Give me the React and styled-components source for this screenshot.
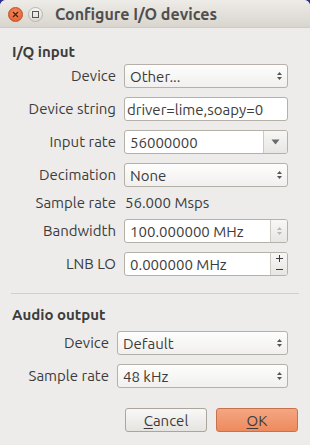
import React from 'react'
import styled, { createGlobalStyle } from 'styled-components'

const Global = createGlobalStyle`
  html, body {
    margin: 0;
    padding: 0;
    background: #2c2f8c;
  }
  body {
    font-family: Ubuntu, Lato, "Open Sans", sans-serif;
    font-size: 15px;
    color: #3c3c3c;
  }
`

const Window = styled.div`
  width: 310px;
  height: 445px;
  background: #edeceb;
  border-radius: 6px 6px 0 0;
  overflow: hidden;
  display: flex;
  flex-direction: column;
`

const TitleBar = styled.div`
  height: 28px;
  flex: none;
  display: flex;
  align-items: center;
  padding-left: 8px;
  gap: 5px;
  background: linear-gradient(#eeece8, #d9d5ce);
  border-bottom: 1px solid #cfcbc4;
  box-sizing: border-box;
`

const WinButton = styled.div`
  width: 15px;
  height: 15px;
  border-radius: 50%;
  box-sizing: border-box;
  display: flex;
  align-items: center;
  justify-content: center;
  background: ${p => p.close ? 'radial-gradient(circle at 50% 35%, #f58b5d, #e2582a)' : 'linear-gradient(#f6f5f3, #dcd9d4)'};
  border: 1px solid ${p => p.close ? '#c44e24' : '#b9b5ae'};
  margin-top: 1px;
`

const Title = styled.div`
  margin-left: 7px;
  font-weight: bold;
  font-size: 16px;
  color: #4f4f4f;
  margin-top: 1px;
`

const Content = styled.div`
  flex: 1;
  display: flex;
  flex-direction: column;
  padding: 15px 11px 13px 11px;
`

const SectionTitle = styled.div`
  font-weight: bold;
  font-size: 15px;
  line-height: 17px;
  padding-left: 1px;
  margin-bottom: ${p => p.gap}px;
`

const Form = styled.div`
  display: grid;
  grid-template-columns: ${p => p.labelWidth}px 1fr;
  column-gap: 8px;
  row-gap: 9px;
  align-items: center;
  margin-right: 11px;
`

const Label = styled.div`
  text-align: right;
  white-space: nowrap;
  line-height: 14px;
`

const Value = styled.div`
  line-height: 14px;
  padding-left: 1px;
`

const Field = styled.div`
  height: 24px;
  box-sizing: border-box;
  border: 1px solid #b5b0a8;
  border-radius: 3px;
  background: ${p => p.plain ? '#ffffff' : 'linear-gradient(#fdfdfd, #f1f0ee)'};
  display: flex;
  align-items: stretch;
  overflow: hidden;
`

const FieldText = styled.div`
  flex: 1;
  display: flex;
  align-items: center;
  padding-left: ${p => p.pad ?? 5}px;
  white-space: nowrap;
  overflow: hidden;
`

const SideButton = styled.div`
  width: ${p => p.w}px;
  flex: none;
  border-left: 1px solid #cdc9c3;
  background: linear-gradient(#f7f7f6, #e8e6e3);
  display: flex;
  flex-direction: column;
  align-items: center;
  justify-content: center;
`

const Arrows = styled.div`
  width: 16px;
  flex: none;
  display: flex;
  align-items: center;
  justify-content: center;
`

const SpinHalf = styled.div`
  flex: 1;
  width: 100%;
  display: flex;
  align-items: center;
  justify-content: center;
`

const Separator = styled.div`
  height: 1px;
  background: #d3d0cb;
  margin: 17px 0 12px 0;
`

const Buttons = styled.div`
  margin-top: auto;
  display: flex;
  justify-content: flex-end;
  gap: 9px;
  padding-right: 1px;
`

const Button = styled.div`
  width: 82px;
  height: 24px;
  box-sizing: border-box;
  border-radius: 3px;
  display: flex;
  align-items: center;
  justify-content: center;
  border: 1px solid ${p => p.primary ? '#c9714a' : '#aaa59d'};
  background: ${p => p.primary ? 'linear-gradient(#f4a683, #ee8a5d)' : 'linear-gradient(#f8f8f7, #e6e4e0)'};
  color: #3c3c3c;
  u { text-decoration-thickness: 1px; text-underline-offset: 2px; }
`

const UpDown = ({ color = '#555' }) => (
  <svg width="7" height="12" viewBox="0 0 7 12">
    <path d="M3.5 2 L6 5 L1 5 Z" fill={color} />
    <path d="M3.5 10 L6 7 L1 7 Z" fill={color} />
  </svg>
)

const Down = () => (
  <svg width="9" height="6" viewBox="0 0 9 6">
    <path d="M0.5 0.5 L8.5 0.5 L4.5 5.5 Z" fill="#6a6a6a" />
  </svg>
)

const Plus = () => (
  <svg width="7" height="7" viewBox="0 0 7 7">
    <path d="M0 3.5 H7 M3.5 0 V7" stroke="#3c3c3c" strokeWidth="1" />
  </svg>
)

const Minus = () => (
  <svg width="7" height="7" viewBox="0 0 7 7">
    <path d="M0 3.5 H7" stroke="#3c3c3c" strokeWidth="1" />
  </svg>
)

const Combo = ({ value }) => (
  <Field>
    <FieldText>{value}</FieldText>
    <Arrows><UpDown /></Arrows>
  </Field>
)

const App = () => (
  <>
    <Global />
    <Window>
      <TitleBar>
        <WinButton close>
          <svg width="7" height="7" viewBox="0 0 7 7">
            <path d="M1 1 L6 6 M6 1 L1 6" stroke="#4a2010" strokeWidth="1.3" />
          </svg>
        </WinButton>
        <WinButton>
          <svg width="7" height="7" viewBox="0 0 7 7">
            <rect x="0.5" y="0.5" width="6" height="6" fill="none" stroke="#555" strokeWidth="1" />
          </svg>
        </WinButton>
        <Title>Configure I/O devices</Title>
      </TitleBar>
      <Content>
        <SectionTitle gap={4}>I/Q input</SectionTitle>
        <Form labelWidth={105}>
          <Label>Device</Label>
          <Combo value="Other..." />
          <Label>Device string</Label>
          <Field plain>
            <FieldText pad={2}>driver=lime,soapy=0</FieldText>
          </Field>
          <Label>Input rate</Label>
          <Field plain>
            <FieldText>56000000</FieldText>
            <SideButton w={23}><Down /></SideButton>
          </Field>
          <Label>Decimation</Label>
          <Combo value="None" />
          <Label>Sample rate</Label>
          <Value>56.000 Msps</Value>
          <Label>Bandwidth</Label>
          <Field plain>
            <FieldText>100.000000 MHz</FieldText>
            <SideButton w={16}><UpDown color="#bcb9b4" /></SideButton>
          </Field>
          <Label>LNB LO</Label>
          <Field plain>
            <FieldText>0.000000 MHz</FieldText>
            <SideButton w={16}>
              <SpinHalf><Plus /></SpinHalf>
              <SpinHalf><Minus /></SpinHalf>
            </SideButton>
          </Field>
        </Form>
        <Separator />
        <SectionTitle gap={8}>Audio output</SectionTitle>
        <Form labelWidth={98}>
          <Label>Device</Label>
          <Combo value="Default" />
          <Label>Sample rate</Label>
          <Combo value="48 kHz" />
        </Form>
        <Buttons>
          <Button><span><u>C</u>ancel</span></Button>
          <Button primary><span><u>O</u>K</span></Button>
        </Buttons>
      </Content>
    </Window>
  </>
)

export default App
